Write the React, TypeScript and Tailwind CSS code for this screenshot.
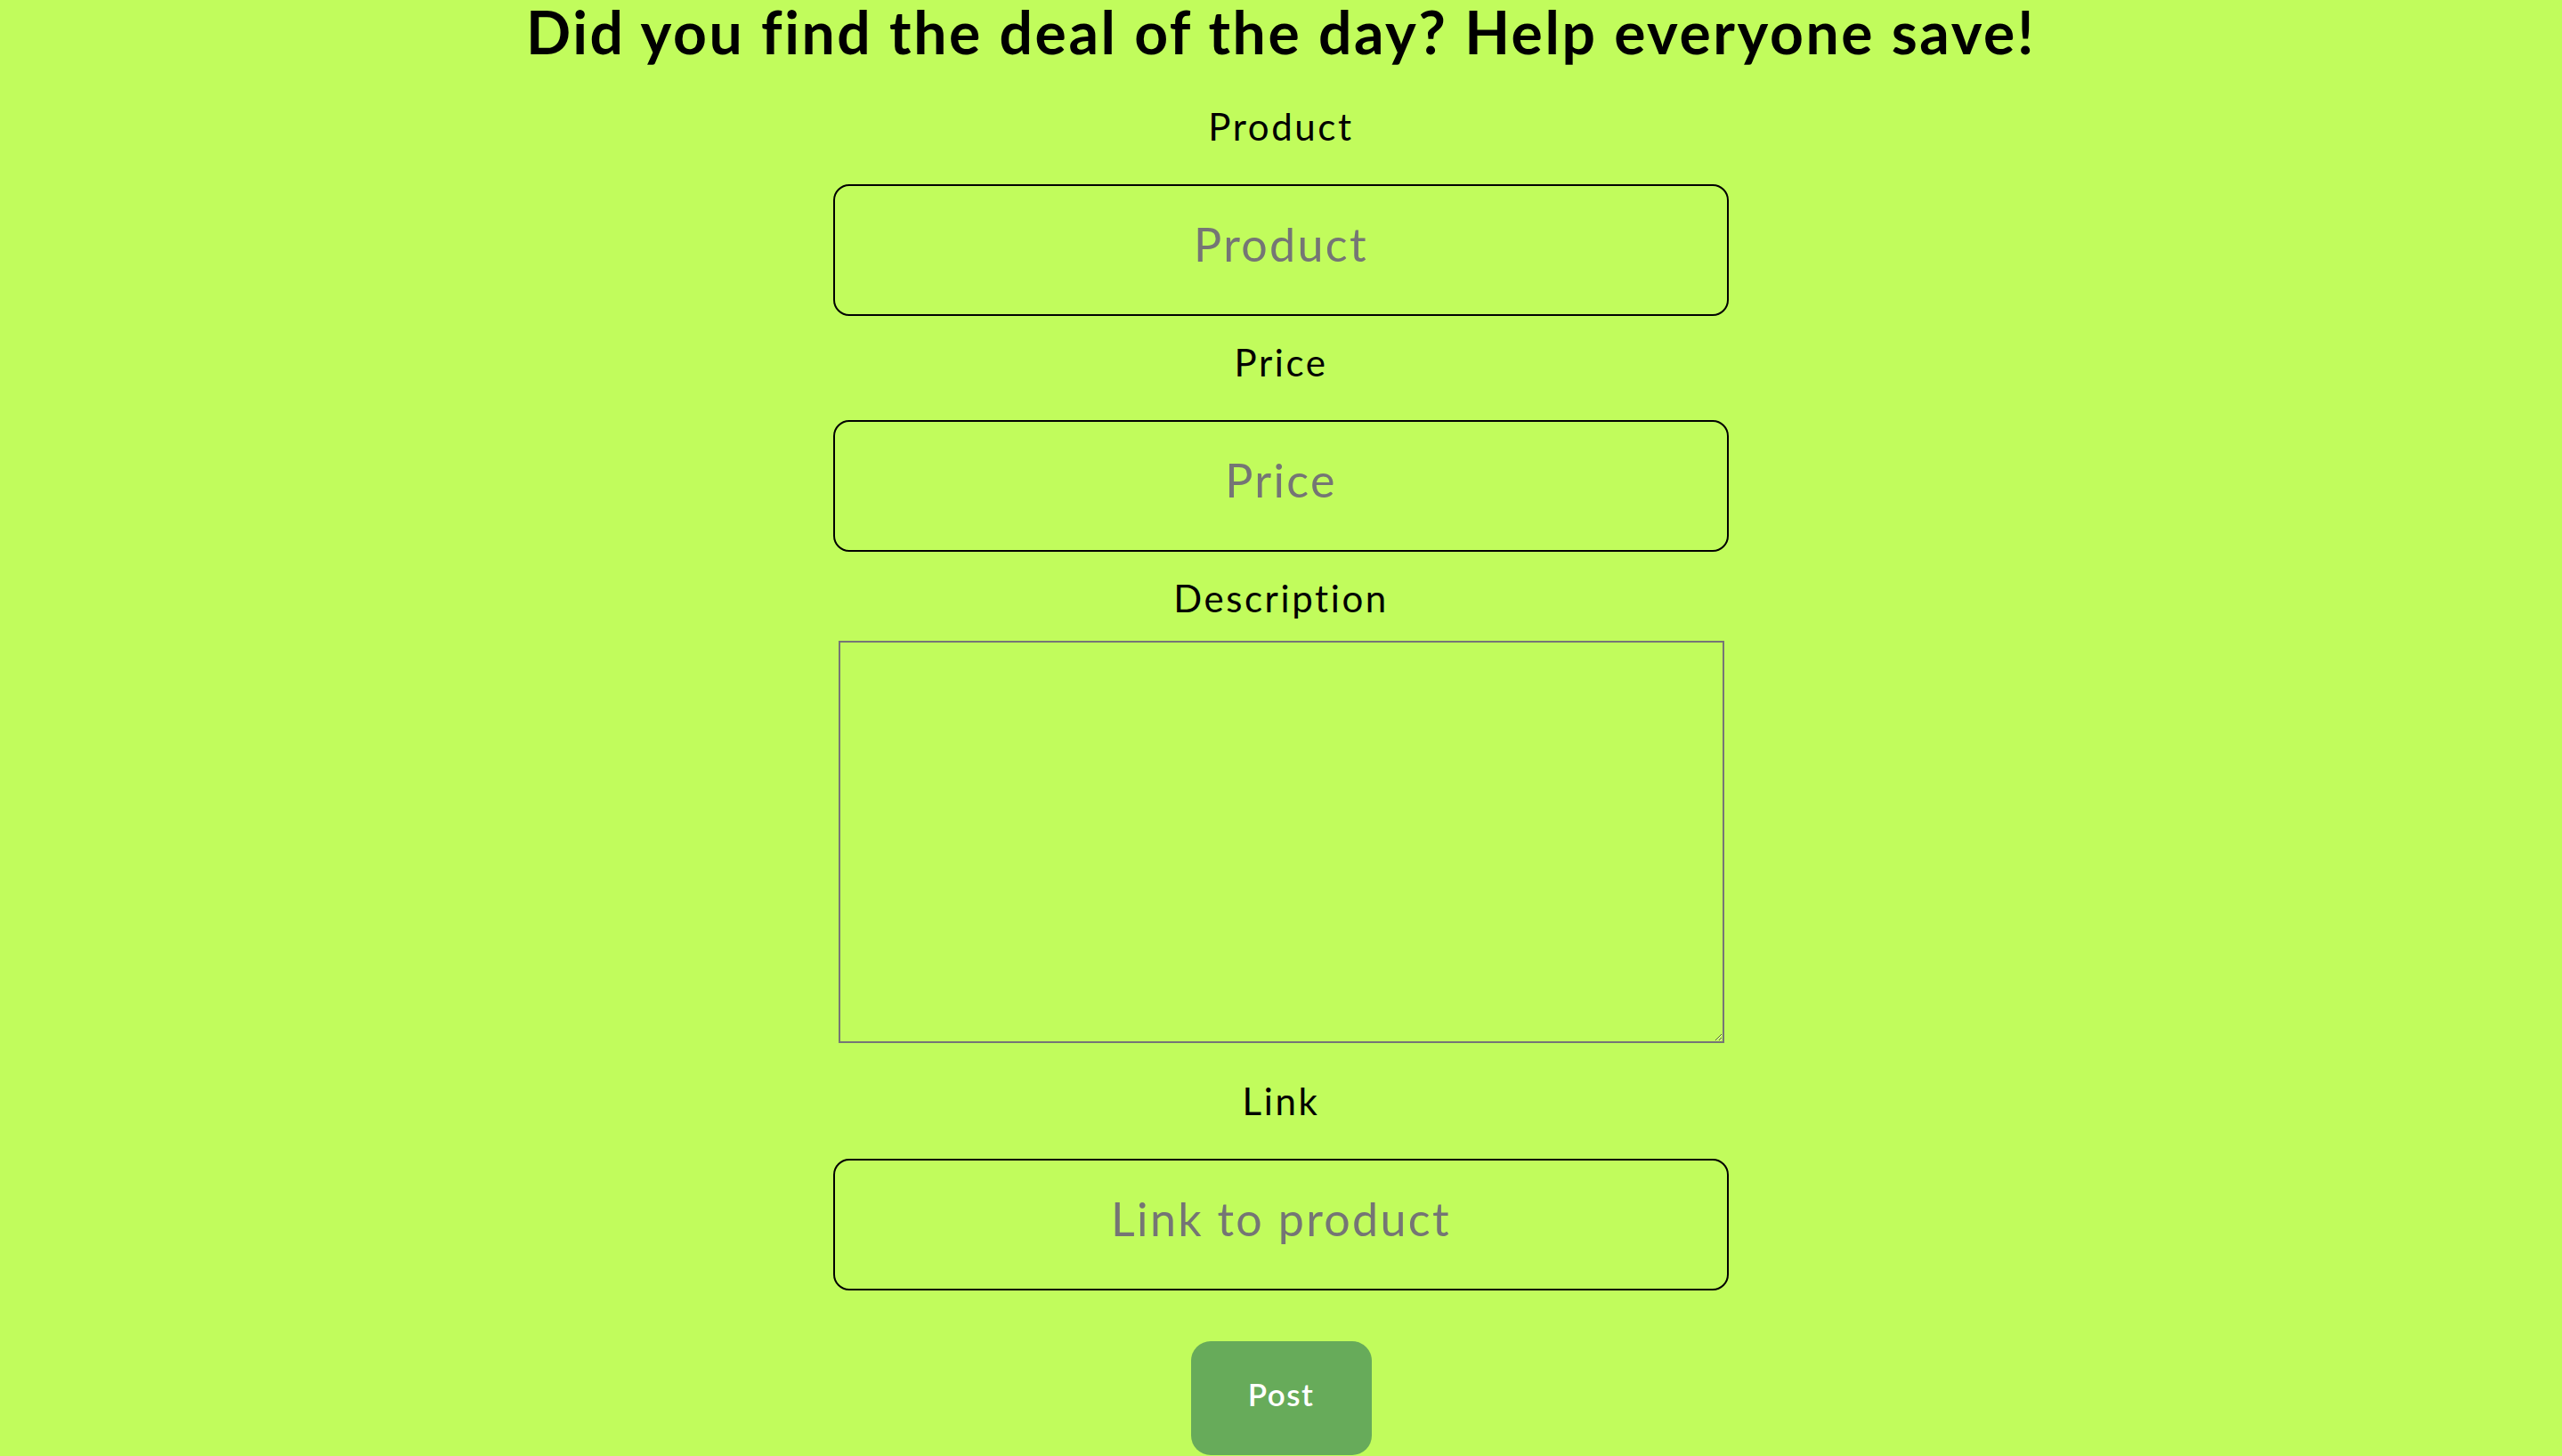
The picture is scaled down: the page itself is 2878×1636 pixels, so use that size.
import React from "react";

const Field = ({
  label,
  placeholder,
  top,
}: {
  label: string;
  placeholder: string;
  top: string;
}) => (
  <>
    <label className={`${top} block text-[42px] leading-[50px] tracking-[2.6px] text-black`}>{label}</label>
    <input
      type="text"
      placeholder={placeholder}
      className="mt-[40px] w-full h-[148px] pb-[14px] rounded-[18px] border-2 border-black bg-transparent text-center text-[52px] tracking-[2.3px] text-black placeholder:text-[#757575] outline-none"
    />
  </>
);

export default function App() {
  return (
    <div className="min-h-screen bg-[#c1fc5c] flex flex-col items-center font-['Lato',sans-serif]">
      <h1 className="text-[66px] leading-[72px] font-bold tracking-[2.6px] text-black">
        Did you find the deal of the day? Help everyone save!
      </h1>
      <form className="w-[1006px] flex flex-col items-center" onSubmit={(e) => e.preventDefault()}>
        <Field label="Product" placeholder="Product" top="mt-[45px]" />
        <Field label="Price" placeholder="Price" top="mt-[27px]" />

        <label className="mt-[27px] block text-[42px] leading-[50px] tracking-[2.6px] text-black">Description</label>
        {/* plain textarea, browser-looking border */}
        <textarea className="mt-[23px] w-[995px] h-[452px] border-2 border-[#767676] bg-transparent resize-y outline-none" />

        <Field label="Link" placeholder="Link to product" top="mt-[40px]" />

        <button
          type="submit"
          className="mt-[57px] w-[203px] h-[128px] pb-[10px] rounded-[22px] bg-[#67ab5a] text-white text-[35px] font-semibold tracking-[1.5px]"
        >
          Post
        </button>
      </form>
    </div>
  );
}
